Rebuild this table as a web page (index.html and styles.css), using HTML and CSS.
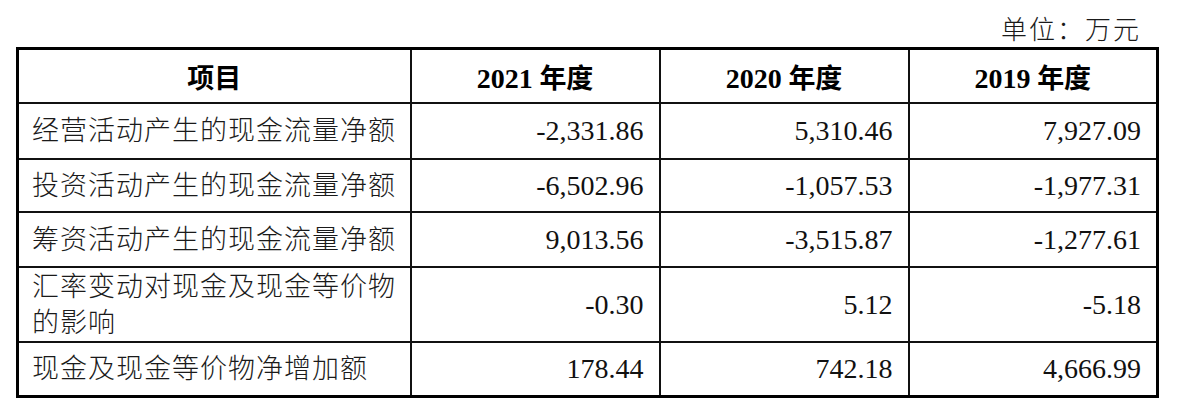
FILE: index.html
```html
<!DOCTYPE html>
<html lang="zh-CN">
<head>
<meta charset="utf-8">
<link rel="stylesheet" href="styles.css">
</head>
<body>
<div class="page">
  <div class="unit">单位：万元</div>
  <table class="cash">
    <colgroup>
      <col class="c-item"><col class="c-year"><col class="c-year"><col class="c-year">
    </colgroup>
    <thead>
      <tr>
        <th>项目</th>
        <th><span class="num">2021</span> 年度</th>
        <th><span class="num">2020</span> 年度</th>
        <th><span class="num">2019</span> 年度</th>
      </tr>
    </thead>
    <tbody>
      <tr class="r1">
        <td class="label">经营活动产生的现金流量净额</td>
        <td class="val">-2,331.86</td>
        <td class="val">5,310.46</td>
        <td class="val">7,927.09</td>
      </tr>
      <tr class="r2">
        <td class="label">投资活动产生的现金流量净额</td>
        <td class="val">-6,502.96</td>
        <td class="val">-1,057.53</td>
        <td class="val">-1,977.31</td>
      </tr>
      <tr class="r3">
        <td class="label">筹资活动产生的现金流量净额</td>
        <td class="val">9,013.56</td>
        <td class="val">-3,515.87</td>
        <td class="val">-1,277.61</td>
      </tr>
      <tr class="r4">
        <td class="label">汇率变动对现金及现金等价物<br>的影响</td>
        <td class="val">-0.30</td>
        <td class="val">5.12</td>
        <td class="val">-5.18</td>
      </tr>
      <tr class="r5">
        <td class="label">现金及现金等价物净增加额</td>
        <td class="val">178.44</td>
        <td class="val">742.18</td>
        <td class="val">4,666.99</td>
      </tr>
    </tbody>
  </table>
</div>
</body>
</html>
```
FILE: styles.css
```css
html, body {
  margin: 0;
  padding: 0;
  background: #ffffff;
}
body {
  font-family: "Liberation Serif", "Noto Sans CJK SC", serif;
  color: #111;
}
.page {
  width: 1182px;
  height: 412px;
  padding: 15px 0 0 16px;
  box-sizing: border-box;
}
.unit {
  width: 1142px;
  box-sizing: border-box;
  text-align: right;
  padding-right: 17px;
  font-size: 26px;
  line-height: 32px;
  height: 32px;
  letter-spacing: 2px;
  color: #1a1a1a;
  font-weight: 300;
}
.cash {
  border-collapse: collapse;
  border: 3px solid #000;
  width: 1143px;
  table-layout: fixed;
}
.c-item { width: 393px; }
.c-year { width: 249px; }
.cash th, .cash td {
  border: 2px solid #111;
  padding: 0;
}
.cash th {
  height: 52px;
  font-size: 27px;
  font-weight: 700;
  text-align: center;
  vertical-align: middle;
  color: #000;
}
.num {
  font-size: 28px;
}
.cash td {
  font-size: 27px;
  vertical-align: middle;
}
.label {
  text-align: left;
  padding-left: 13px !important;
  letter-spacing: 1px;
  line-height: 36px;
  font-weight: 300;
  color: #1a1a1a;
}
.val {
  text-align: right;
  padding-right: 15px !important;
  font-size: 28px !important;
  color: #111;
}
.r1 td { height: 54px; }
.r2 td { height: 51px; }
.r3 td { height: 53px; }
.r4 td { height: 73px; }
.r5 td { height: 52px; }
```
